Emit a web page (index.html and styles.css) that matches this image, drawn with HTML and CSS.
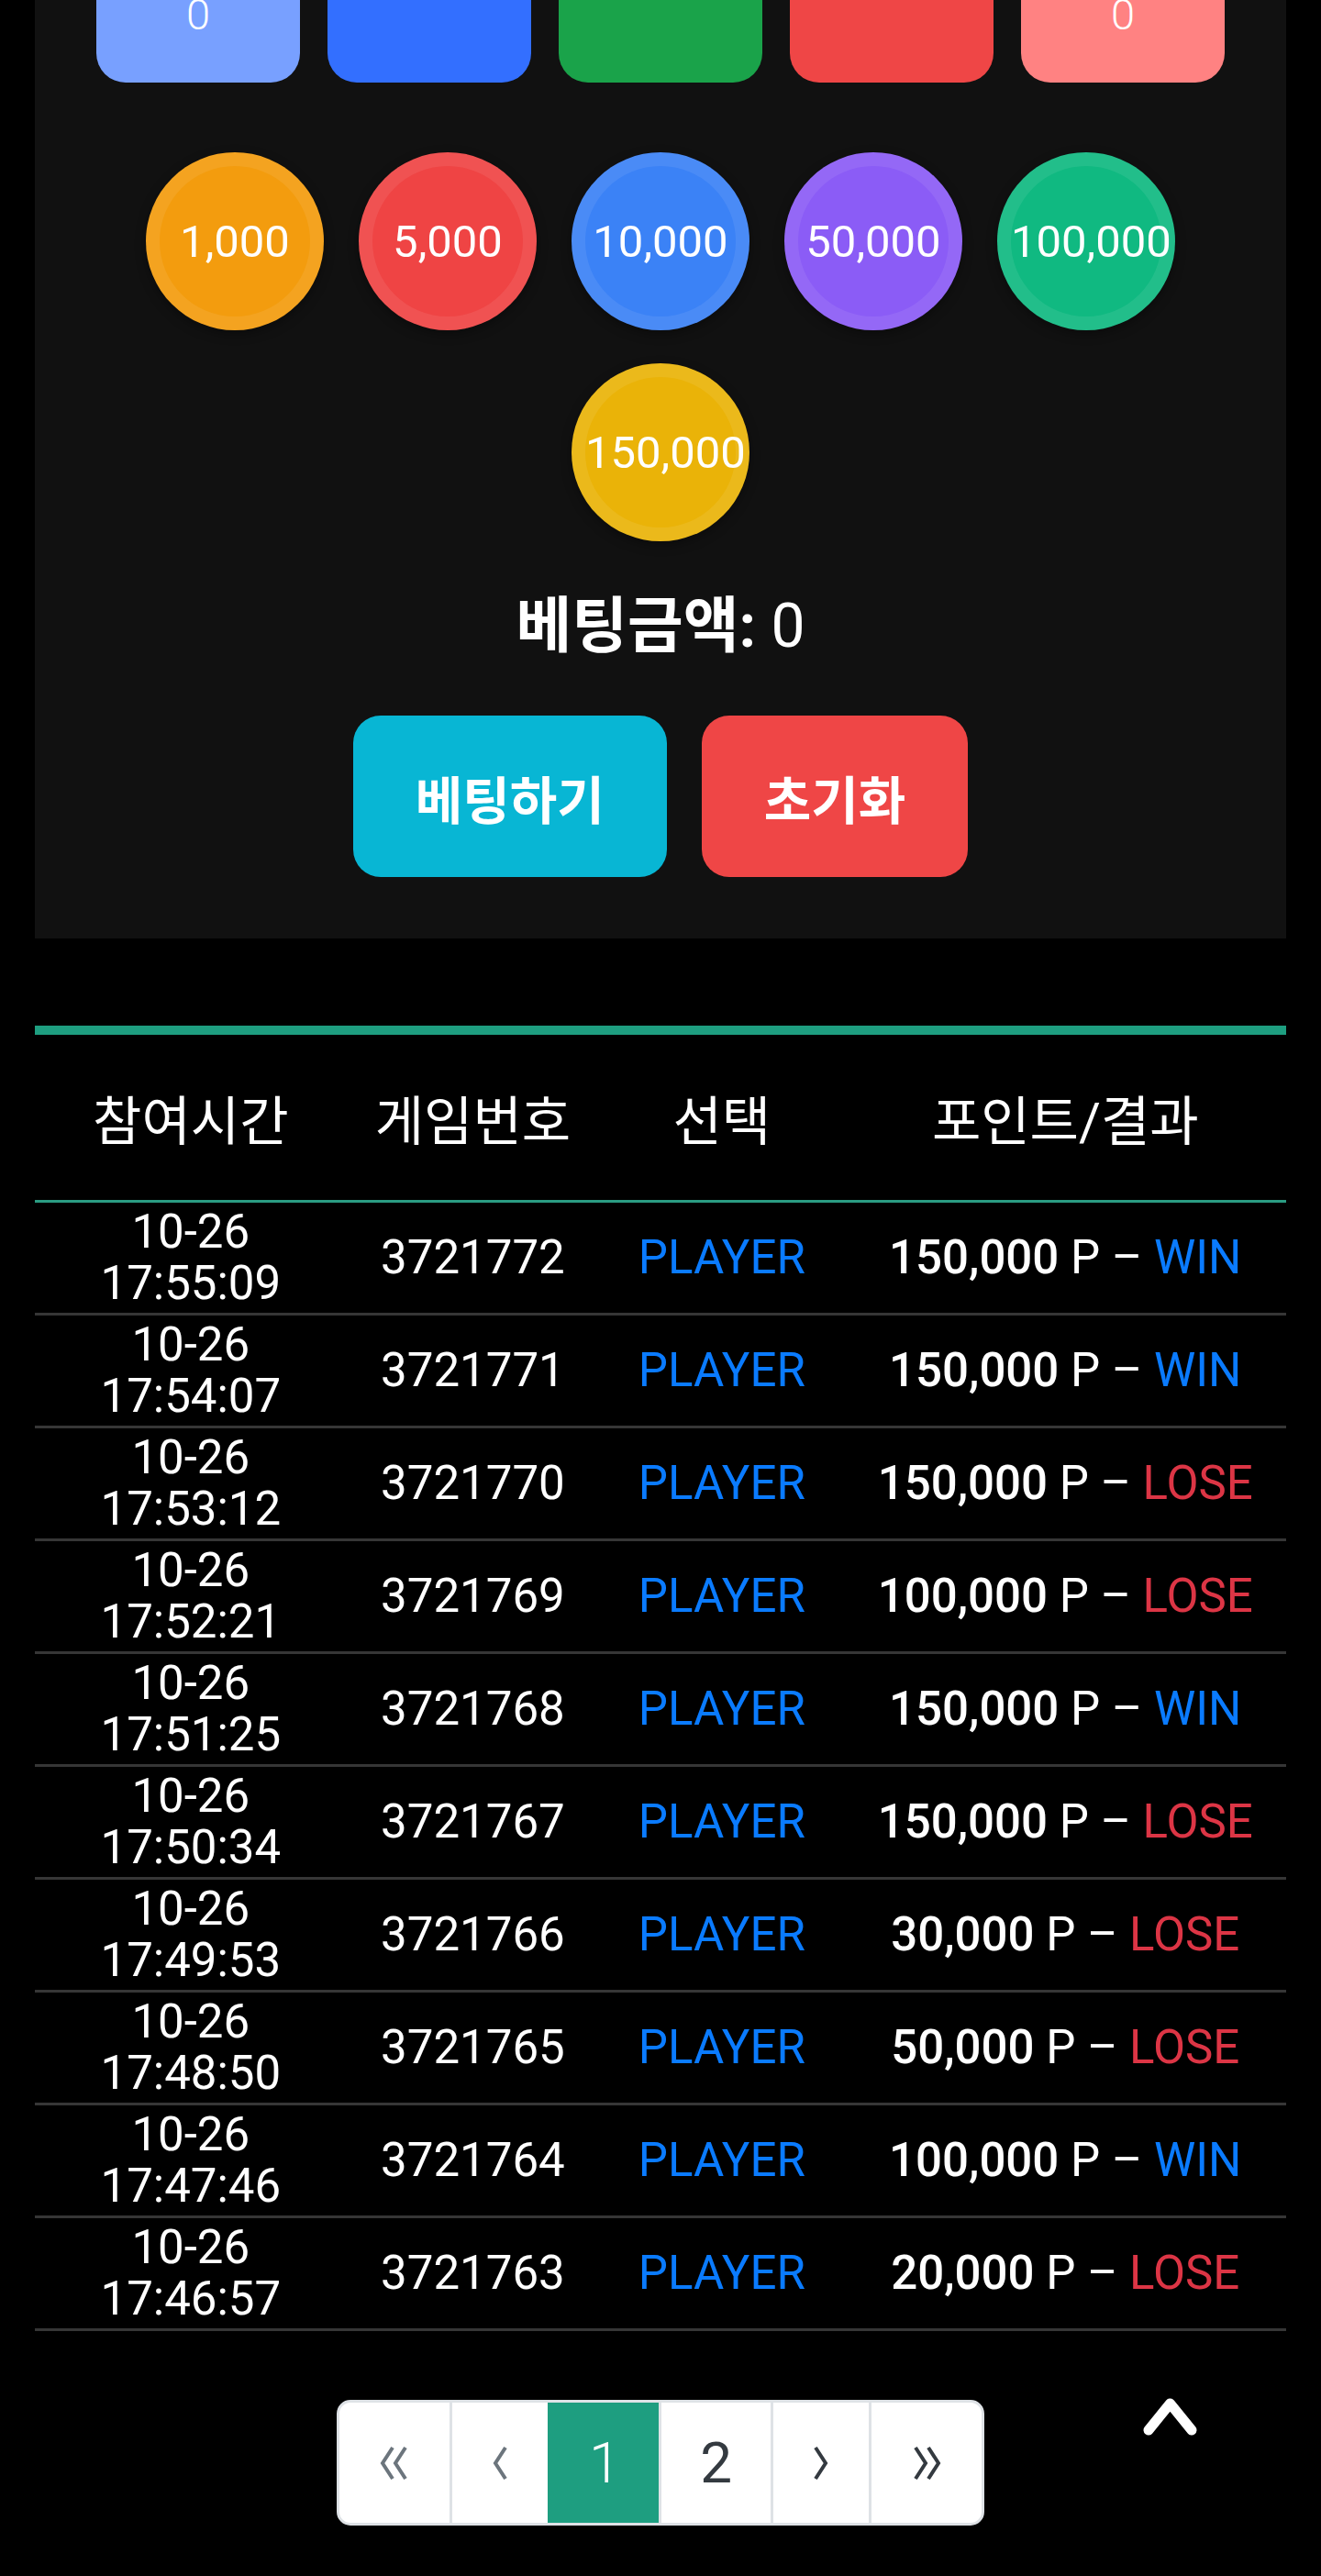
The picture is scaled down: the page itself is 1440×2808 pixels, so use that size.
FILE: index.html
```html
<!DOCTYPE html>
<html lang="ko">
<head>
    <meta charset="UTF-8">
    <meta name="viewport" content="width=device-width, initial-scale=1.0">
    <title>베팅</title>
    <link rel="stylesheet" href="styles.css">
</head>
<body>

    <div class="wrap">
        <section class="bet-panel">
            <div class="bet-boxes">
                <div class="bet-box box-pp"><span>0</span></div>
                <div class="bet-box box-p"></div>
                <div class="bet-box box-t"></div>
                <div class="bet-box box-b"></div>
                <div class="bet-box box-bp"><span>0</span></div>
            </div>

            <div class="chips">
                <button class="chip chip-orange">1,000</button>
                <button class="chip chip-red">5,000</button>
                <button class="chip chip-blue">10,000</button>
                <button class="chip chip-purple">50,000</button>
                <button class="chip chip-green">100,000</button>
                <button class="chip chip-yellow">150,000</button>
            </div>

            <div class="bet-amount">베팅금액: <span class="amount-num">0</span></div>

            <div class="actions">
                <button class="btn btn-bet">베팅하기</button>
                <button class="btn btn-reset">초기화</button>
            </div>
        </section>

        <table class="history">
            <colgroup>
                <col class="c-time">
                <col class="c-game">
                <col class="c-pick">
                <col class="c-result">
            </colgroup>
            <thead>
                <tr>
                    <th>참여시간</th>
                    <th>게임번호</th>
                    <th>선택</th>
                    <th>포인트/결과</th>
                </tr>
            </thead>
            <tbody>
                <tr><td>10-26<br>17:55:09</td><td>3721772</td><td class="pick">PLAYER</td><td><b>150,000</b> P – <span class="win">WIN</span></td></tr>
                <tr><td>10-26<br>17:54:07</td><td>3721771</td><td class="pick">PLAYER</td><td><b>150,000</b> P – <span class="win">WIN</span></td></tr>
                <tr><td>10-26<br>17:53:12</td><td>3721770</td><td class="pick">PLAYER</td><td><b>150,000</b> P – <span class="lose">LOSE</span></td></tr>
                <tr><td>10-26<br>17:52:21</td><td>3721769</td><td class="pick">PLAYER</td><td><b>100,000</b> P – <span class="lose">LOSE</span></td></tr>
                <tr><td>10-26<br>17:51:25</td><td>3721768</td><td class="pick">PLAYER</td><td><b>150,000</b> P – <span class="win">WIN</span></td></tr>
                <tr><td>10-26<br>17:50:34</td><td>3721767</td><td class="pick">PLAYER</td><td><b>150,000</b> P – <span class="lose">LOSE</span></td></tr>
                <tr><td>10-26<br>17:49:53</td><td>3721766</td><td class="pick">PLAYER</td><td><b>30,000</b> P – <span class="lose">LOSE</span></td></tr>
                <tr><td>10-26<br>17:48:50</td><td>3721765</td><td class="pick">PLAYER</td><td><b>50,000</b> P – <span class="lose">LOSE</span></td></tr>
                <tr><td>10-26<br>17:47:46</td><td>3721764</td><td class="pick">PLAYER</td><td><b>100,000</b> P – <span class="win">WIN</span></td></tr>
                <tr><td>10-26<br>17:46:57</td><td>3721763</td><td class="pick">PLAYER</td><td><b>20,000</b> P – <span class="lose">LOSE</span></td></tr>
            </tbody>
        </table>

        <nav class="pager">
            <ul>
                <li class="off">
                    <svg width="36" height="38" viewBox="0 0 36 38"><polyline points="16,2 5,19 16,36" /><polyline points="30,2 19,19 30,36" /></svg>
                </li>
                <li class="off">
                    <svg width="20" height="38" viewBox="0 0 20 38"><polyline points="16,2 5,19 16,36" /></svg>
                </li>
                <li class="active">1</li>
                <li>2</li>
                <li>
                    <svg width="20" height="38" viewBox="0 0 20 38"><polyline points="4,2 15,19 4,36" /></svg>
                </li>
                <li>
                    <svg width="36" height="38" viewBox="0 0 36 38"><polyline points="6,2 17,19 6,36" /><polyline points="20,2 31,19 20,36" /></svg>
                </li>
            </ul>
        </nav>
    </div>

    <!-- 맨 위로 -->
    <a class="to-top" href="#">
        <svg width="63" height="42" viewBox="0 0 63 42"><polyline points="8,36 31.5,7 55,36" /></svg>
    </a>

</body>
</html>
```

FILE: styles.css
```css
body {
    margin: 0;
    padding: 0;
    background-color: #000;
    color: #fff;
    font-family: Roboto, "Noto Sans CJK KR", sans-serif;
    position: relative;
    min-height: 2808px;
}
.wrap {
    padding: 0 38px;
    margin-top: -60px;
}
.bet-panel {
    background-color: #111;
    padding-bottom: 67px;
}
.bet-boxes {
    display: flex;
    justify-content: center;
    gap: 30px;
}
.bet-box {
    width: 222px;
    height: 150px;
    border-radius: 0 0 32px 32px;
    display: flex;
    align-items: center;
    justify-content: center;
    font-size: 47px;
    font-weight: 300;
}
.box-pp { background-color: #78a0ff; }
.box-p  { background-color: #336fff; }
.box-t  { background-color: #1aa34a; }
.box-b  { background-color: #ef4646; }
.box-bp { background-color: #ff8282; }

.chips {
    display: flex;
    flex-wrap: wrap;
    justify-content: center;
    gap: 36px 38px;
    max-width: 1130px;
    margin: 76px auto 0;
}
.chip {
    width: 194px;
    height: 194px;
    box-sizing: border-box;
    border-radius: 50%;
    border: 15px solid rgba(255, 255, 255, 0.08);
    box-shadow: 0 4px 12px rgba(0, 0, 0, 0.35);
    color: #fff;
    font-family: Roboto, sans-serif;
    font-size: 49px;
    padding: 0;
    cursor: pointer;
}
.chip-orange { background-color: #f39c0e; }
.chip-red    { background-color: #ef4444; }
.chip-blue   { background-color: #3b82f6; }
.chip-purple { background-color: #8b5cf6; }
.chip-green  { background-color: #10b981; }
.chip-yellow { background-color: #eab308; }

.bet-amount {
    margin-top: 44px;
    text-align: center;
    font-size: 66px;
    font-weight: 700;
    line-height: 98px;
}
.amount-num {
    font-weight: 400;
}
.actions {
    display: flex;
    justify-content: center;
    gap: 38px;
    margin-top: 48px;
}
.btn {
    height: 176px;
    padding: 0 68px;
    border: none;
    border-radius: 30px;
    color: #fff;
    font-family: "Noto Sans CJK KR", sans-serif;
    font-size: 56px;
    font-weight: 700;
    cursor: pointer;
}
.btn-bet   { background-color: #08b6d4; }
.btn-reset { background-color: #ef4646; }

.history {
    width: 100%;
    margin-top: 95px;
    border-collapse: collapse;
    border-top: 10px solid #1e9e80;
}
.c-time   { width: 24.9%; }
.c-game   { width: 20.2%; }
.c-pick   { width: 19.6%; }
.c-result { width: 35.3%; }
.history th {
    height: 180px;
    padding: 0;
    font-size: 58px;
    font-weight: 400;
    border-bottom: 3px solid #2a9c82;
}
.history td {
    padding: 4px 0;
    font-size: 51px;
    line-height: 56px;
    text-align: center;
    border-bottom: 3px solid #363636;
}
.history td b {
    font-weight: 500;
}
.history .pick,
.history .win {
    color: #0a7bff;
}
.history .lose {
    color: #dc3545;
}

.pager {
    display: flex;
    justify-content: center;
    margin-top: 75px;
}
.pager ul {
    display: flex;
    list-style: none;
    margin: 0;
    padding: 0;
    background-color: #fff;
    border: 3px solid #dee2e6;
    border-radius: 15px;
    overflow: hidden;
}
.pager li {
    height: 131px;
    padding: 0 42px;
    display: flex;
    align-items: center;
    justify-content: center;
    border-left: 3px solid #dee2e6;
    color: #343a40;
    font-size: 62px;
}
.pager li:first-child {
    border-left: none;
}
.pager li.active {
    background-color: #1e9e80;
    border-left-color: #1e9e80;
    color: #fff;
    font-weight: 300;
}
.pager svg polyline {
    fill: none;
    stroke: #343a40;
    stroke-width: 4;
}
.pager li.off svg polyline {
    stroke: #6c757d;
}

.to-top {
    position: absolute;
    left: 1244px;
    top: 2613px;
    display: block;
}
.to-top polyline {
    fill: none;
    stroke: #fff;
    stroke-width: 11;
    stroke-linecap: round;
    stroke-linejoin: round;
}
```
